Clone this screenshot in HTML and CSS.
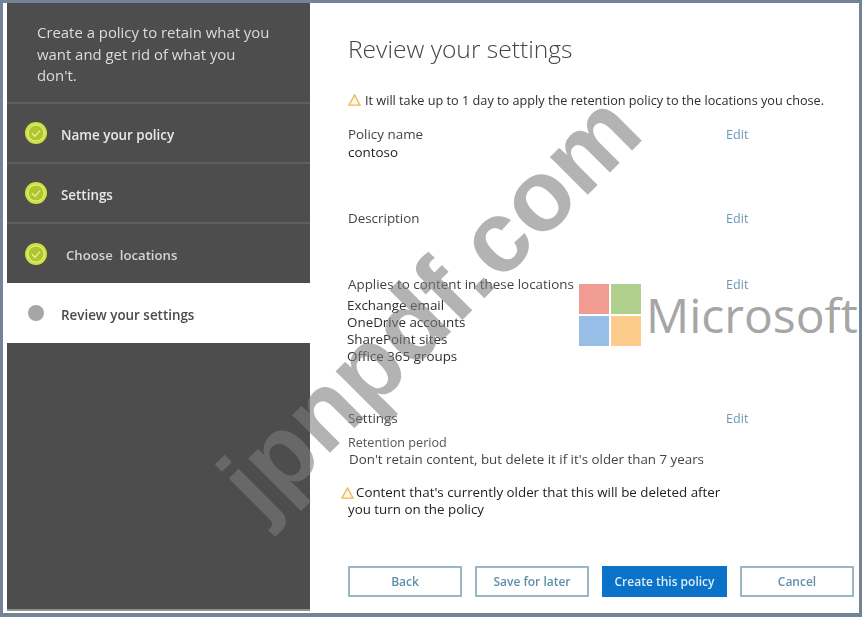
FILE: index.html
```html
<!DOCTYPE html>
<html lang="en">
<head>
<meta charset="utf-8">
<title>Review your settings</title>
<link rel="stylesheet" href="styles.css">
</head>
<body>
<div class="frame">
  <div class="shot">
    <aside class="side">
      <p class="intro">Create a policy to retain what you want and get rid of what you don't.</p>
      <ul class="steps">
        <li class="step done">
          <svg class="tick" viewBox="0 0 24 24"><circle cx="12" cy="12" r="11" fill="#d0e040"/><circle cx="12" cy="12" r="8" fill="#aec82c" stroke="#eef3c0" stroke-width=".8"/><path d="M8 12.3l2.9 2.9 5.2-5.6" fill="none" stroke="#e4efa0" stroke-width="1.3"/></svg>
          <span>Name your policy</span>
        </li>
        <li class="step done">
          <svg class="tick" viewBox="0 0 24 24"><circle cx="12" cy="12" r="11" fill="#d0e040"/><circle cx="12" cy="12" r="8" fill="#aec82c" stroke="#eef3c0" stroke-width=".8"/><path d="M8 12.3l2.9 2.9 5.2-5.6" fill="none" stroke="#e4efa0" stroke-width="1.3"/></svg>
          <span>Settings</span>
        </li>
        <li class="step done last">
          <svg class="tick" viewBox="0 0 24 24"><circle cx="12" cy="12" r="11" fill="#d0e040"/><circle cx="12" cy="12" r="8" fill="#aec82c" stroke="#eef3c0" stroke-width=".8"/><path d="M8 12.3l2.9 2.9 5.2-5.6" fill="none" stroke="#e4efa0" stroke-width="1.3"/></svg>
          <span class="shifted">Choose&nbsp; locations</span>
        </li>
        <li class="step current">
          <i class="dot"></i>
          <span>Review your settings</span>
        </li>
      </ul>
      <div class="side-rest"></div>
    </aside>
    <main class="main">
      <h1>Review your settings</h1>
      <p class="notice">
        <svg class="warn" viewBox="0 0 14 13"><path d="M7 1L13 12H1Z" fill="#fff6df" stroke="#efb65c" stroke-width="1.4"/></svg>
        It will take up to 1 day to apply the retention policy to the locations you chose.
      </p>
      <section class="block b-name">
        <div class="head"><span>Policy name</span><a>Edit</a></div>
        <div class="val dark">contoso</div>
      </section>
      <section class="block b-desc">
        <div class="head"><span>Description</span><a>Edit</a></div>
      </section>
      <section class="block b-loc">
        <div class="head"><span>Applies to content in these locations</span><a>Edit</a></div>
        <div class="val list">Exchange email<br>OneDrive accounts<br>SharePoint sites<br>Office 365 groups</div>
      </section>
      <section class="block b-set">
        <div class="head"><span>Settings</span><a>Edit</a></div>
        <div class="sub">Retention period</div>
        <div class="val">Don't retain content, but delete it if it's older than 7 years</div>
      </section>
      <p class="notice second">
        <svg class="warn" viewBox="0 0 14 13"><path d="M7 1L13 12H1Z" fill="#fff6df" stroke="#efb65c" stroke-width="1.4"/></svg>
        <span>Content that's currently older that this will be deleted after<br><span class="hang">you turn on the policy</span></span>
      </p>
      <div class="actions">
        <button class="btn">Back</button>
        <button class="btn">Save for later</button>
        <button class="btn primary">Create this policy</button>
        <button class="btn">Cancel</button>
      </div>
    </main>
    <div class="ms-logo">
      <div class="squares"><i class="red"></i><i class="green"></i><i class="blue"></i><i class="yellow"></i></div>
      <span>Microsoft</span>
    </div>
    <div class="watermark">jpnpdf.com</div>
  </div>
</div>
</body>
</html>
```
FILE: styles.css
```css
* { box-sizing: border-box; }
html, body { margin: 0; height: 100%; }
body { background: #738499; font-family: "Open Sans", "Noto Sans", sans-serif; overflow: hidden; }
.frame { width: 862px; height: 617px; padding: 3px 3px 4px 3px; }
.shot { position: relative; display: flex; width: 100%; height: 100%; background: #fff; padding-left: 4px; overflow: hidden; }
.side { width: 303px; height: 608px; display: flex; flex-direction: column; flex: none; filter: blur(.4px); }
.intro { margin: 0; height: 99px; padding: 19px 36px 0 30px; background: #4d4d4d; color: #dcdcdc; font-size: 14.9px; line-height: 21.5px; }
.steps { list-style: none; margin: 0; padding: 0; }
.step { display: flex; align-items: center; height: 60px; padding-left: 17px; font-size: 13.4px; font-weight: 600; color: #e8e8e8; background: #4d4d4d; border-top: 2px solid #5e5e5e; }
.step.last { height: 61px; }
.step.current { height: 60px; background: #fff; color: #4a4a4a; border-top: 0; }
.step span { margin-top: 4px; }
.tick { width: 24px; height: 24px; flex: none; margin-right: 13px; }
.step .shifted { margin-left: 5px; margin-top: 2px; color: #d4d4d4; font-size: 13.2px; }
.dot { width: 16px; height: 16px; border-radius: 50%; background: #a6a6a6; margin: 0 17px 0 4px; flex: none; }
.side-rest { flex: 1; background: #4d4d4d; border-bottom: 2px solid #8f8f8f; }
.main { flex: 1; padding: 0 0 0 38px; display: flex; flex-direction: column; color: #333; font-size: 13.4px; line-height: 17px; filter: blur(.35px); }
h1 { margin: 30px 0 0; font-size: 24.6px; line-height: 32px; font-weight: 300; color: #444; }
.notice { margin: 27px 0 0; display: flex; align-items: center; gap: 4px; font-size: 12.7px; font-weight: 500; color: #2e2e2e; }
.warn { width: 13px; height: 12px; flex: none; margin-top: -2px; }
.block { width: 402px; }
.head { display: flex; justify-content: space-between; align-items: baseline; color: #444; }
.head a { color: #6c98b4; width: 24px; font-size: 12.6px; }
.b-name { margin-top: 17px; }
.val.dark { color: #222; font-weight: 500; margin-top: 1px; }
.b-desc { margin-top: 49px; }
.b-loc { margin-top: 49px; }
.list { margin-top: 4px; margin-left: -1px; color: #2e2e2e; }
.b-set { margin-top: 45px; }
.sub { margin-top: 7px; color: #555; font-size: 12.6px; }
.b-set .val { margin-left: 1px; color: #444; font-size: 13.35px; }
.notice.second { margin: 16px 0 0 -7px; align-items: flex-start; gap: 2px; font-size: 13.35px; color: #222; }
.notice.second .warn { margin-top: 3px; }
.hang { margin-left: -8px; }
.actions { margin-top: 48px; display: flex; gap: 13px; }
.btn { width: 114px; height: 31px; border: 2px solid #9ab7c6; background: #fff; color: #5f8fae; font: 600 12px "Open Sans", sans-serif; }
.btn.primary { width: 125px; background: #0a72c9; border-color: #0a72c9; color: #dcecf8; }
.ms-logo { position: absolute; left: 576px; top: 281px; display: flex; align-items: center; gap: 5px; color: #a6a6a6; font-size: 48px; line-height: 40px; font-weight: 500; }
.squares { display: grid; grid-template-columns: 30px 30px; grid-template-rows: 30px 30px; gap: 2px; }
.red { background: #f09c92; }
.green { background: #b1cf8d; }
.blue { background: #96bee6; }
.yellow { background: #fdcb8c; }
.watermark { position: absolute; left: 154px; top: 256px; font-family: "Liberation Sans", sans-serif; font-weight: 700; font-size: 101px; line-height: 90px; color: rgba(124,124,124,.58); transform: rotate(-45deg); white-space: nowrap; }
```
